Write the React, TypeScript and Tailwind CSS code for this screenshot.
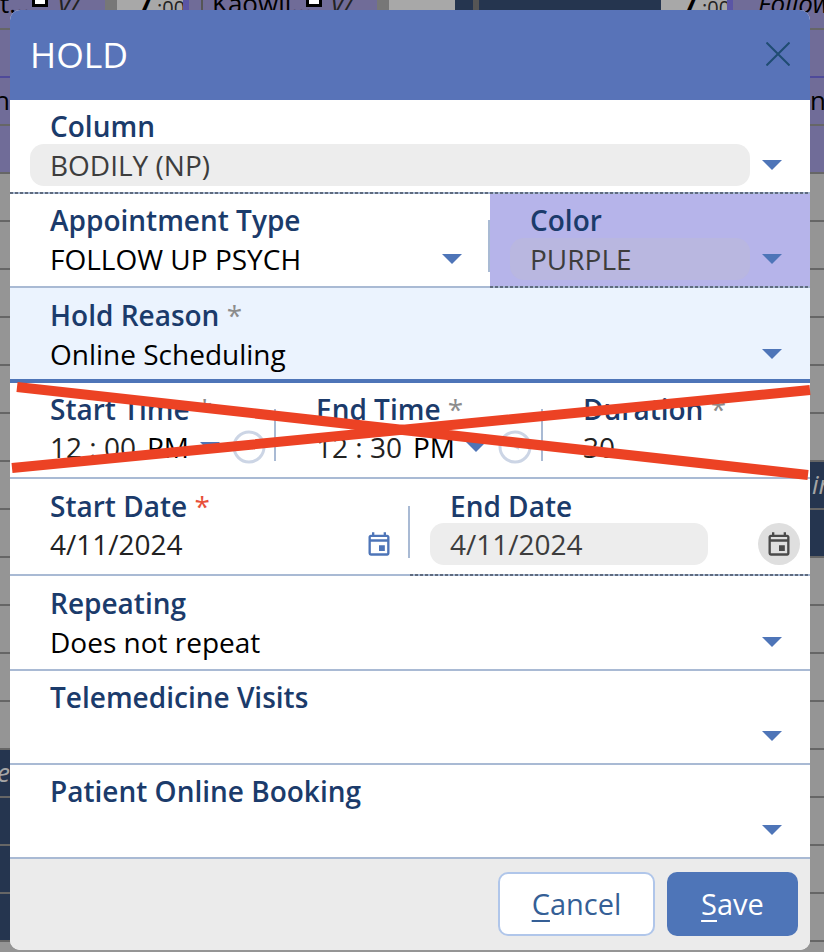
import React from 'react';
import { MdOutlineEvent } from 'react-icons/md';

const Caret = () => (
  <svg width="20" height="10" viewBox="0 0 20 10" className="shrink-0">
    <path d="M0 0H20L10 10Z" fill="#4e75b8" />
  </svg>
);

const Clock = () => (
  <svg width="34" height="34" viewBox="0 0 34 34" className="shrink-0">
    <circle cx="17" cy="17" r="15" fill="none" stroke="#ccd5e5" strokeWidth="3" />
    <path d="M17 11V17L21 19" fill="none" stroke="#ccd5e5" strokeWidth="1.5" />
  </svg>
);

const Rule = () => <div className="h-[2px] bg-[#a9bad4]" />;

const DashedRule = () => (
  <div className="h-[2px] bg-[repeating-linear-gradient(90deg,#5f6b7f_0_3px,#a9bad4_3px_5px)]" />
);

const Divider = () => <div className="w-[2px] h-[52px] bg-[#a9bad4] shrink-0" />;

const Label = ({ children, star }: { children: React.ReactNode; star?: 'gray' | 'red' }) => (
  <div className="h-[36px] leading-[36px] text-[28px] font-semibold text-[#1b3b6b] whitespace-nowrap">
    {children}
    {star === 'gray' && <span className="text-[#8c8c8c] font-normal"> *</span>}
    {star === 'red' && <span className="text-[#e8503a] font-normal"> *</span>}
  </div>
);

const SelectRow = ({ label, value, star, top, bottom }: { label: string; value?: string; star?: 'gray'; top: string; bottom: string }) => (
  <div className={`pl-[40px] pr-[28px] ${top} ${bottom}`}>
    <Label star={star}>{label}</Label>
    <div className="h-[42px] flex items-center justify-between text-[28px] text-black">
      <span>{value}</span>
      <Caret />
    </div>
  </div>
);

const TimeValue = ({ time }: { time: string }) => (
  <div className="h-[42px] mt-[-1px] flex items-center text-[#222222] whitespace-nowrap">
    <span className="w-[97px]">{time}</span>
    <span className="w-[41px] text-black">PM</span>
    <div className="ml-[12px]"><Caret /></div>
    <div className="ml-[12px]"><Clock /></div>
  </div>
);

const purple = 'bg-[#706c98]';
const cells = Array.from({ length: 20 }, (_, i) => i);

const SideCol = ({ side }: { side: 'left' | 'right' }) => (
  <div className={side === 'left' ? 'w-[10px] overflow-hidden' : 'w-[14px] overflow-hidden'}>
    {cells.map((i) => {
      const navy = side === 'left' ? i >= 15 && i <= 18 : i === 9 || i === 10;
      return (
        <div
          key={i}
          className={`h-[48px] border-b-2 text-[26px] leading-[44px] whitespace-nowrap ${i === 0 ? 'border-[#4f4a9a]' : 'border-[#666666]'} ${i < 3 ? purple : navy ? 'bg-[#25354f]' : 'bg-[#959595]'} ${side === 'left' ? 'flex justify-end' : ''}`}
        >
          {i === 1 && <span className="text-black">{side === 'left' ? 'h' : 'n'}</span>}
          {side === 'left' && i === 15 && <span className="italic text-[#a5a5a5]">Ve</span>}
          {side === 'right' && i === 9 && <span className="italic text-[#a5a5a5] pl-[2px]">ir</span>}
        </div>
      );
    })}
  </div>
);

const Time = () => (
  <div className="-mt-[10px] text-[26px] leading-[30px] whitespace-nowrap">
    <span className="font-bold text-black">7</span>
    <span className="text-[#222222] text-[20px]"> :00</span>
  </div>
);

const Box = () => <div className="w-[16px] h-[7px] border-x-[3px] border-b-[3px] border-black bg-white" />;

const Backdrop = () => (
  <div className="w-[824px] h-[952px] overflow-hidden bg-[#959595]">
    <div className="h-[30px] flex border-b-2 border-[#666666]">
      <div className={`w-[105px] ${purple} flex items-start text-[26px] leading-[30px] overflow-hidden`}>
        <span className="-mt-[12px] w-[32px] text-black">t...</span>
        <Box />
        <span className="-mt-[12px] ml-[9px] italic text-[#222222]">V/</span>
      </div>
      <div className="w-[12px] bg-[#777777]" />
      <div className="w-[66px] bg-[#a8a8a8] pl-[20px]"><Time /></div>
      <div className="w-[6px] bg-[#5a55a5]" />
      <div className={`w-[188px] ${purple} flex items-start text-[26px] leading-[30px] overflow-hidden`}>
        <div className="ml-[12px] w-[2px] h-full bg-[#555555]" />
        <span className="-mt-[12px] ml-[9px] w-[94px] text-black">Kaowil...</span>
        <Box />
        <span className="-mt-[12px] ml-[8px] italic text-[#222222]">V/</span>
      </div>
      <div className="w-[12px] bg-[#777777]" />
      <div className="w-[66px] bg-[#a8a8a8]" />
      <div className="w-[18px] bg-[#25354f]" />
      <div className="w-[6px] bg-[#555555]" />
      <div className="w-[182px] bg-[#25354f]" />
      <div className="w-[66px] bg-[#a8a8a8] pl-[21px]"><Time /></div>
      <div className="w-[6px] bg-[#5a55a5]" />
      <div className={`flex-1 ${purple} flex items-start text-[26px] leading-[30px] overflow-hidden`}>
        <div className="ml-[13px] w-[2px] h-full bg-[#555555]" />
        <span className="-mt-[12px] ml-[12px] italic text-black">Follow</span>
      </div>
    </div>
    <div className="flex justify-between">
      <SideCol side="left" />
      <SideCol side="right" />
    </div>
  </div>
);

export default function App() {
  return (
    <div className="relative w-[824px] h-[952px] overflow-hidden font-['Open_Sans',sans-serif]">
      <Backdrop />

      <div className="absolute left-[10px] top-[10px] w-[800px] h-[940px] rounded-[10px] overflow-hidden bg-white flex flex-col">
        {/* Header */}
        <div className="h-[90px] shrink-0 bg-[#5873b8] flex items-center justify-between pl-[20px] pr-[20px]">
          <span className="text-[35.5px] text-white">HOLD</span>
          <svg width="24" height="24" viewBox="0 0 24 24" className="-mt-[2px]">
            <path d="M0.5 0.5L23.5 23.5M23.5 0.5L0.5 23.5" stroke="#1f4c72" strokeWidth="2" fill="none" />
          </svg>
        </div>

        {/* Column */}
        <div className="h-[92px] pt-[8px] pl-[20px] pr-[28px]">
          <div className="pl-[20px]"><Label>Column</Label></div>
          <div className="h-[42px] flex items-center gap-[12px]">
            <div className="flex-1 h-full rounded-[14px] bg-[#ededed] pl-[20px] flex items-center text-[28px] text-[#3d3d3d]">BODILY (NP)</div>
            <Caret />
          </div>
        </div>
        <DashedRule />

        {/* Appointment type + color */}
        <div className="h-[92px] flex">
          <div className="w-[480px] flex items-center">
            <div className="flex-1 pl-[40px] pr-[26px] pt-[8px] self-start">
              <Label>Appointment Type</Label>
              <div className="h-[42px] flex items-center justify-between text-[28px] text-black">
                <span>FOLLOW UP PSYCH</span>
                <Caret />
              </div>
            </div>
            <div className="self-start mt-[26px]"><Divider /></div>
          </div>
          <div className="flex-1 bg-[#b6b4ea] pt-[8px] pl-[20px] pr-[28px]">
            <div className="pl-[20px]"><Label>Color</Label></div>
            <div className="h-[42px] flex items-center gap-[12px]">
              <div className="flex-1 h-full rounded-[14px] bg-[#b9b7e0] pl-[20px] flex items-center text-[28px] text-[#3d3d3d]">PURPLE</div>
              <Caret />
            </div>
          </div>
        </div>
        <div className="flex">
          <div className="w-[480px]"><Rule /></div>
          <div className="flex-1"><DashedRule /></div>
        </div>

        {/* Hold reason */}
        <div className="h-[91px] bg-[#ebf3fe]">
          <SelectRow label="Hold Reason" value="Online Scheduling" star="gray" top="pt-[9px]" bottom="pb-[4px]" />
        </div>
        <div className="h-[4px] bg-[#4e75b8]" />

        {/* Time */}
        <div className="h-[94px] flex items-start text-[28px]">
          <div className="w-[264px] pl-[40px] pt-[8px]">
            <Label star="gray">Start Time</Label>
            <TimeValue time="12 : 00" />
          </div>
          <div className="mt-[26px]"><Divider /></div>
          <div className="w-[265px] pl-[40px] pt-[8px]">
            <Label star="gray">End Time</Label>
            <TimeValue time="12 : 30" />
          </div>
          <div className="mt-[26px]"><Divider /></div>
          <div className="flex-1 pl-[40px] pt-[8px]">
            <Label star="gray">Duration</Label>
            <div className="h-[42px] mt-[-1px] flex items-center text-[#222222]">30</div>
          </div>
        </div>
        <Rule />

        {/* Dates */}
        <div className="h-[95px] flex items-start text-[28px]">
          <div className="w-[398px] pl-[40px] pr-[15px] pt-[9px]">
            <Label star="red">Start Date</Label>
            <div className="h-[42px] -mt-[1px] flex items-center justify-between text-[#222222]">
              4/11/2024
              <MdOutlineEvent size={28} color="#4e75b8" />
            </div>
          </div>
          <div className="mt-[27px]"><Divider /></div>
          <div className="flex-1 pl-[20px] pr-[10px] pt-[9px]">
            <div className="pl-[20px]"><Label>End Date</Label></div>
            <div className="h-[42px] -mt-[1px] flex items-center justify-between">
              <div className="w-[278px] h-full rounded-[14px] bg-[#ededed] pl-[20px] flex items-center text-[#3d3d3d]">4/11/2024</div>
              <div className="w-[42px] h-[42px] rounded-full bg-[#dfdfdf] flex items-center justify-center">
                <MdOutlineEvent size={28} color="#4a4a4a" />
              </div>
            </div>
          </div>
        </div>
        <div className="flex">
          <div className="w-[400px]"><Rule /></div>
          <div className="flex-1"><DashedRule /></div>
        </div>

        <div className="h-[93px]">
          <SelectRow label="Repeating" value="Does not repeat" top="pt-[9px]" bottom="pb-[5px]" />
        </div>
        <Rule />
        <div className="h-[92px]">
          <SelectRow label="Telemedicine Visits" top="pt-[8px]" bottom="pb-[6px]" />
        </div>
        <Rule />
        <div className="h-[92px]">
          <SelectRow label="Patient Online Booking" top="pt-[8px]" bottom="pb-[6px]" />
        </div>
        <Rule />

        {/* Footer */}
        <div className="flex-1 bg-[#ebebeb] flex items-start justify-end gap-[12px] pt-[13px] pr-[12px] text-[29px]">
          <button className="w-[157px] h-[64px] rounded-[10px] border-2 border-[#b0c6ea] bg-white text-[#355f96]">
            <span className="underline underline-offset-[5px]">C</span>ancel
          </button>
          <button className="w-[131px] h-[64px] rounded-[10px] bg-[#4e75b8] text-white">
            <span className="underline underline-offset-[5px]">S</span>ave
          </button>
        </div>
      </div>

      {/* Red strike-through drawn over the time row */}
      <svg width="824" height="952" viewBox="0 0 824 952" className="absolute left-0 top-0 pointer-events-none">
        <path d="M17 387L808 475M12 468L810 390" stroke="#ec4224" strokeWidth="10" fill="none" />
      </svg>
    </div>
  );
}
